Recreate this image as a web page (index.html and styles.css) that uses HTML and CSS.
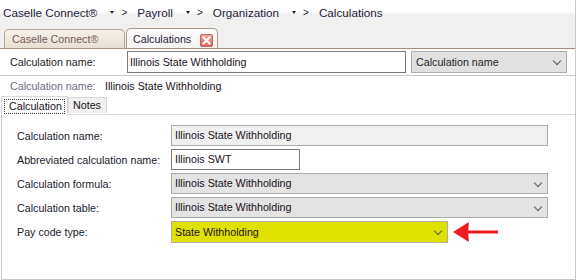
FILE: index.html
```html
<!DOCTYPE html>
<html>
<head>
<meta charset="utf-8">
<link rel="stylesheet" href="styles.css">
</head>
<body>
<div class="app">
  <div class="top">
    <div class="crumbs">
      <span class="crumb">Caselle Connect®</span><span class="dd"></span><span class="sep">&gt;</span>
      <span class="crumb">Payroll</span><span class="dd"></span><span class="sep">&gt;</span>
      <span class="crumb">Organization</span><span class="dd"></span><span class="sep">&gt;</span>
      <span class="crumb">Calculations</span>
    </div>
    <div class="doctabs">
      <div class="dtab">Caselle Connect®</div>
      <div class="dtab active">Calculations
        <svg class="close" width="13" height="13" viewBox="0 0 13 13">
          <defs>
            <linearGradient id="cg" x1="0" y1="0" x2="0" y2="1">
              <stop offset="0" stop-color="#f6a8a0"/>
              <stop offset="1" stop-color="#e0605a"/>
            </linearGradient>
          </defs>
          <rect x="0.5" y="0.5" width="12" height="12" rx="1.5" fill="url(#cg)" stroke="#c06060"/>
          <path d="M3.5 3.5 L9.5 9.5 M9.5 3.5 L3.5 9.5" stroke="#fff" stroke-width="2" stroke-linecap="square"/>
        </svg>
      </div>
    </div>
  </div>

  <div class="searchrow">
    <span class="slabel">Calculation name:</span>
    <div class="sinput">Illinois State Withholding</div>
    <div class="sselect">Calculation name<span class="chev"></span></div>
  </div>

  <div class="titlerow">
    <span class="tlabel">Calculation name:</span>
    <span class="tvalue">Illinois State Withholding</span>
  </div>

  <div class="tabs">
    <div class="tab active"><span class="focus">Calculation</span></div>
    <div class="tab">Notes</div>
  </div>

  <div class="panel">
    <div class="form">
      <span class="flabel">Calculation name:</span>
      <div class="field readonly wide">Illinois State Withholding</div>

      <span class="flabel">Abbreviated calculation name:</span>
      <div class="field edit short">Illinois SWT</div>

      <span class="flabel">Calculation formula:</span>
      <div class="field combo wide">Illinois State Withholding<span class="chev"></span></div>

      <span class="flabel">Calculation table:</span>
      <div class="field combo wide">Illinois State Withholding<span class="chev"></span></div>

      <span class="flabel">Pay code type:</span>
      <div class="payrow">
        <div class="field combo pay">State Withholding<span class="chev"></span></div>
        <svg class="arrow" width="46" height="22" viewBox="0 0 46 22">
          <polygon points="0,11 16,1 15,11 16,21" fill="#ee1c24"/>
          <rect x="14" y="9.5" width="31" height="3" fill="#ee1c24"/>
        </svg>
      </div>
    </div>
  </div>
</div>
</body>
</html>
```

FILE: styles.css
```css
html, body {
  margin: 0;
  padding: 0;
}
body {
  width: 576px;
  height: 280px;
  overflow: hidden;
  background: #fff;
  font-family: "Liberation Sans", Arial, sans-serif;
  font-size: 10.7px;
  color: #1c1c24;
}
.app {
  width: 576px;
  height: 280px;
  box-sizing: border-box;
  border-right: 1px solid #cdc6c1;
  display: flex;
  flex-direction: column;
}

/* top breadcrumb + document tabs */
.top {
  height: 49px;
  box-sizing: border-box;
  border-bottom: 1px solid #a38e83;
  background: linear-gradient(#ffffff 0, #ffffff 11px, #f0f0f0 15px, #f0f0f0 100%);
  display: flex;
  flex-direction: column;
}
.crumbs {
  height: 24px;
  display: flex;
  align-items: center;
  padding-left: 3px;
  font-size: 11.7px;
  color: #1e1a3a;
  white-space: nowrap;
}
.dd {
  width: 0;
  height: 0;
  border-left: 2.5px solid transparent;
  border-right: 2.5px solid transparent;
  border-top: 3px solid #222;
  margin-left: 13px;
  margin-top: 1px;
}
.sep {
  margin-left: 7px;
  margin-right: 10px;
  font-size: 10px;
  color: #222;
}
.doctabs {
  margin-top: 4px;
  height: 20px;
  display: flex;
  align-items: flex-end;
  padding-left: 4px;
  gap: 1px;
}
.dtab {
  height: 19px;
  box-sizing: border-box;
  border: 1px solid #b5a596;
  border-bottom: none;
  border-radius: 5px 5px 0 0;
  background: linear-gradient(#f6f1ea, #e8dfd2);
  color: #735c5c;
  padding-left: 7px;
  width: 121px;
  display: flex;
  align-items: center;
  white-space: nowrap;
}
.dtab.active {
  height: 20px;
  width: 92px;
  padding-left: 6px;
  background: linear-gradient(#fdfcfb, #f6f4f2);
  border-color: #a99889;
  color: #1e1a3a;
  position: relative;
}
.close {
  position: absolute;
  left: 73px;
  top: 5px;
}

/* search row */
.searchrow {
  height: 27px;
  box-sizing: border-box;
  border-bottom: 1px solid #c9c9c9;
  display: flex;
  align-items: flex-start;
  padding-top: 2px;
  padding-left: 10px;
}
.slabel {
  width: 117px;
  line-height: 22px;
}
.sinput {
  width: 279px;
  height: 22px;
  box-sizing: border-box;
  border: 1px solid #7a7a7a;
  padding-left: 2px;
  line-height: 20px;
  color: #1a1020;
}
.sselect {
  margin-left: 5px;
  width: 156px;
  height: 22px;
  box-sizing: border-box;
  border: 1px solid #adadad;
  background: #e1e1e1;
  padding-left: 4px;
  line-height: 20px;
  position: relative;
}

.chev {
  position: absolute;
  right: 6px;
  top: 7px;
  width: 5px;
  height: 5px;
  border-right: 1px solid #5a5a5a;
  border-bottom: 1px solid #5a5a5a;
  transform: rotate(45deg);
  transform-origin: center;
  margin-top: -1px;
}

/* title row */
.titlerow {
  height: 20px;
  box-sizing: border-box;
  display: flex;
  align-items: center;
  padding-left: 10px;
}
.tlabel {
  width: 95px;
  color: #6a6e80;
}
.tvalue {
  color: #1a1020;
}

/* tabs */
.tabs {
  height: 18px;
  display: flex;
  align-items: flex-end;
  padding-left: 1px;
  position: relative;
  z-index: 1;
}
.tab {
  height: 16px;
  box-sizing: border-box;
  border: 1px solid #d9d9d9;
  border-bottom: none;
  background: #f0f0f0;
  padding-left: 4px;
  width: 39px;
  line-height: 15px;
  color: #1a1020;
  margin-bottom: 1px;
}
.tab.active {
  height: 19px;
  width: 67px;
  background: #fff;
  padding: 2px 2px 0 2px;
  margin-bottom: -1px;
}
.focus {
  display: block;
  height: 15px;
  box-sizing: border-box;
  border: 1px dotted #333;
  padding-left: 4px;
  line-height: 13px;
}

/* panel */
.panel {
  flex: 1;
  margin-left: 1px;
  border-left: 1px solid #cdc6c1;
  border-top: 1px solid #d9d9d9;
  border-bottom: 1px solid #cdc6c1;
  padding: 10px 0 0 15px;
}
.form {
  display: grid;
  grid-template-columns: 154px auto;
  grid-auto-rows: 21px;
  row-gap: 3px;
  align-items: center;
}
.flabel {
  color: #1a1a2a;
}
.field {
  height: 21px;
  box-sizing: border-box;
  border: 1px solid #acacac;
  padding-left: 3px;
  line-height: 19px;
  color: #1a1020;
  position: relative;
}
.readonly {
  background: #f0f0f0;
}
.edit {
  background: #fff;
  border-color: #7a7a7a;
}
.combo {
  background: #e3e3e3;
}
.wide {
  width: 377px;
}
.short {
  width: 129px;
}
.payrow {
  display: flex;
  align-items: center;
}
.pay {
  width: 277px;
  height: 22px;
  line-height: 20px;
  background: #e1e100;
  border-color: #b0b0a0;
}
.arrow {
  margin-left: 5px;
}
```
